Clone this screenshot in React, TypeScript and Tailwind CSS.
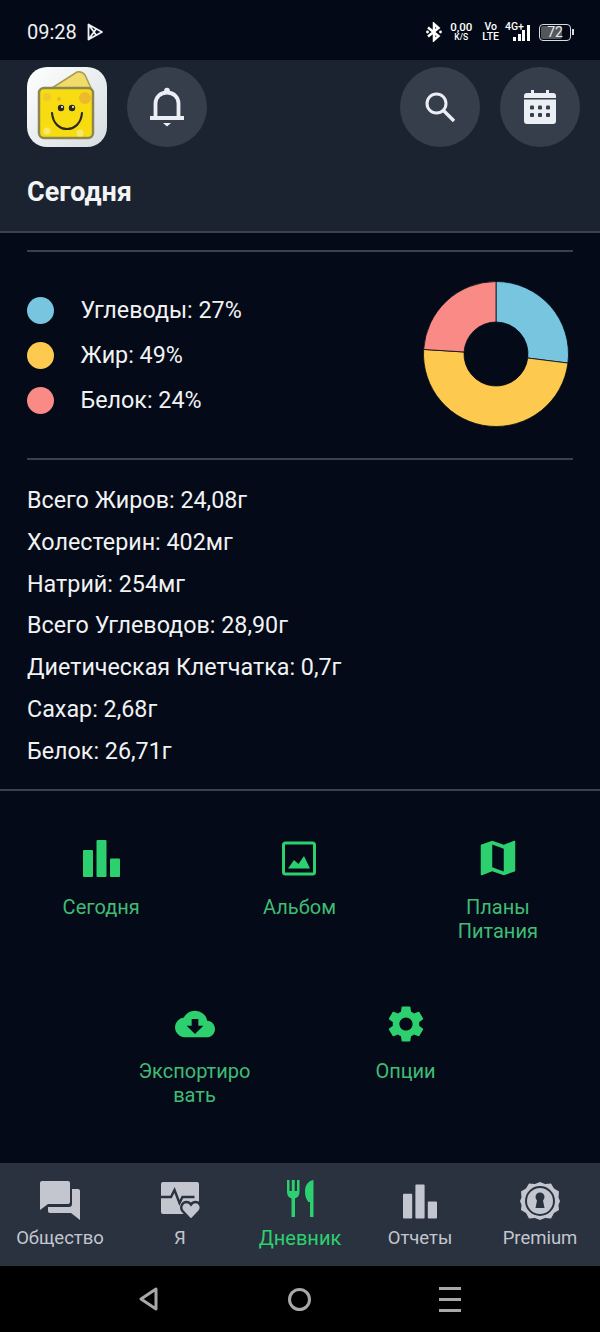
import { MdCloudDownload, MdMap, MdSettings } from 'react-icons/md';

const polar = (r: number, pct: number) => {
  const a = (pct / 100) * 2 * Math.PI;
  return [73 + r * Math.sin(a), 73 - r * Math.cos(a)];
};

const slice = (from: number, to: number) => {
  const [x1, y1] = polar(72.5, from);
  const [x2, y2] = polar(72.5, to);
  const [x3, y3] = polar(32, to);
  const [x4, y4] = polar(32, from);
  const large = to - from > 50 ? 1 : 0;
  return `M${x1} ${y1}A72.5 72.5 0 ${large} 1 ${x2} ${y2}L${x3} ${y3}A32 32 0 ${large} 0 ${x4} ${y4}Z`;
};

const Bars = ({ className }: { className: string }) => (
  <svg viewBox="0 0 37 37" className={className} fill="currentColor">
    <rect x="0" y="10" width="10" height="27" rx="1" />
    <rect x="13.5" y="0" width="10" height="37" rx="1" />
    <rect x="27" y="18.5" width="10" height="18.5" rx="1" />
  </svg>
);

const Cheese = () => (
  <svg viewBox="0 0 80 80" className="w-[80px] h-[80px]">
    <path d="M25 21 50 5q5-1 8 3l6 13z" fill="#f1dc6a" stroke="#a89c55" strokeWidth="1.500" />
    <rect x="12" y="21" width="54" height="50" rx="5" fill="#f7dc12" stroke="#8e8650" strokeWidth="2.500" />
    <circle cx="58" cy="31" r="6" fill="#eeb92c" />
    <circle cx="20" cy="30" r="4" fill="#f2c92c" />
    <circle cx="32" cy="32" r="2" fill="#eeb92c" />
    <circle cx="20" cy="64" r="3.500" fill="#f7e76a" />
    <circle cx="53" cy="66" r="3.500" fill="#f7e76a" />
    <circle cx="34" cy="41" r="3.200" fill="#2c2a20" />
    <circle cx="45" cy="41" r="3.200" fill="#2c2a20" />
    <circle cx="35" cy="40" r="1" fill="#fff" />
    <circle cx="46" cy="40" r="1" fill="#fff" />
    <path d="M25 46c1 11 8 16 15 16s14-5 15-16" fill="none" stroke="#2c2a20" strokeWidth="2.200" strokeLinecap="round" />
  </svg>
);

const legend = [
  { color: 'bg-[#78c5e0]', label: 'Углеводы: 27%' },
  { color: 'bg-[#fdc94f]', label: 'Жир: 49%' },
  { color: 'bg-[#f98a85]', label: 'Белок: 24%' },
];

const nutrients = [
  'Всего Жиров: 24,08г',
  'Холестерин: 402мг',
  'Натрий: 254мг',
  'Всего Углеводов: 28,90г',
  'Диетическая Клетчатка: 0,7г',
  'Сахар: 2,68г',
  'Белок: 26,71г',
];

const App = () => {
  return (
    <div className="w-[600px] h-[1332px] flex flex-col bg-[#040a17] text-white font-['Roboto',sans-serif] overflow-hidden">
      {/* status bar */}
      <div className="h-[60px] shrink-0 flex items-center justify-between pt-[4px] pl-[27px] pr-[26px] bg-[#030916]">
        <div className="flex items-center gap-[10px] text-[20px] text-[#eef0f3]">
          <span>09:28</span>
          <svg viewBox="0 0 16 18" className="w-[16px] h-[18px]" fill="none" stroke="currentColor" strokeWidth="1.800" strokeLinejoin="round">
            <path d="M1.500 1.500v15L15 9zM1.500 1.500 9.500 12.500M1.500 16.500 9.500 5.500" />
          </svg>
        </div>
        <div className="flex items-center text-white">
          <svg viewBox="0 0 16 20" className="w-[16px] h-[20px] mr-[8px]" fill="none" stroke="currentColor" strokeWidth="2.500">
            <path d="M2 5.500 12.500 14 8 18V2l4.500 4L2 14.500" />
            <circle cx="1.500" cy="10" r="1.400" fill="currentColor" stroke="none" />
            <circle cx="14.500" cy="10" r="1.400" fill="currentColor" stroke="none" />
          </svg>
          <div className="flex flex-col items-center w-[22px] text-[11px] leading-[10px] font-medium mr-[10px]">
            <span className="text-[11.500px]">0,00</span>
            <span className="text-[8.500px]">K/S</span>
          </div>
          <div className="flex flex-col items-center text-[10.500px] leading-[10.500px] font-medium mr-[6px]">
            <span>Vo</span>
            <span>LTE</span>
          </div>
          <div className="relative w-[27px] h-[18px] mr-[7px]">
            <span className="absolute left-0 -top-[1px] text-[10.500px] leading-[10px] font-medium">4G+</span>
            <div className="absolute left-[8px] bottom-0 flex items-end gap-[1.500px]">
              <span className="w-[3px] h-[4px] bg-white" />
              <span className="w-[3px] h-[7px] bg-white" />
              <span className="w-[3px] h-[11px] bg-white" />
              <span className="w-[3px] h-[16px] bg-white" />
            </div>
          </div>
          <div className="relative w-[32px] h-[17px] rounded-[4px] border border-[#d8dadd] p-[1px]">
            <div className="w-[21px] h-full rounded-[2px] bg-[#53575c]" />
            <span className="absolute inset-0 flex items-center justify-center text-[14px] leading-none text-[#e8e9ea]">72</span>
          </div>
          <span className="w-[2px] h-[6px] ml-[1px] bg-[#d8dadd]" />
        </div>
      </div>

      {/* header */}
      <div className="h-[173px] shrink-0 flex flex-col bg-[#1c2330] border-b-2 border-[#3b414c]">
        <div className="flex items-center justify-between pt-[7px] pl-[27px] pr-[20px]">
          <div className="flex items-center gap-[20px]">
            <div className="w-[80px] h-[80px] rounded-[20px] overflow-hidden bg-gradient-to-br from-[#ffffff] to-[#d6dde0]">
              <Cheese />
            </div>
            <div className="w-[80px] h-[80px] rounded-full bg-[#373e4b] flex items-center justify-center">
              <svg viewBox="0 0 34 40" className="w-[34px] h-[40px]" fill="none" stroke="#eceef5" strokeWidth="3.800">
                <path d="M5.500 30V16.500C5.500 10 10.500 5.500 17 5.500S28.500 10 28.500 16.500V30" />
                <path d="M0.500 31H33.500" strokeWidth="4" strokeLinecap="round" />
                <circle cx="17" cy="3.500" r="2.800" fill="#eceef5" stroke="none" />
                <path d="M13 36h8l-4 3.500z" fill="#eceef5" stroke="none" />
              </svg>
            </div>
          </div>
          <div className="flex items-center gap-[20px]">
            <div className="w-[80px] h-[80px] rounded-full bg-[#373e4b] flex items-center justify-center">
              <svg viewBox="0 0 30 30" className="w-[30px] h-[30px]" fill="none" stroke="#eceef5" strokeWidth="3">
                <circle cx="11.500" cy="11.500" r="9.500" />
                <path d="M18.500 18.500 29 29" strokeWidth="3.400" />
              </svg>
            </div>
            <div className="w-[80px] h-[80px] rounded-full bg-[#373e4b] flex items-center justify-center">
              <svg viewBox="0 0 32 34" className="w-[32px] h-[34px]">
                <path d="M7 0h3v3h12V0h3v3h4q3 0 3 3v25q0 3-3 3H3q-3 0-3-3V6q0-3 3-3h4z" fill="#eceef5" />
                <rect x="0" y="8" width="32" height="1.500" fill="#373e4b" />
                <g fill="#373e4b">
                  <rect x="6" y="15.500" width="4" height="4" rx="1" />
                  <rect x="14" y="15.500" width="4" height="4" rx="1" />
                  <rect x="22" y="15.500" width="4" height="4" rx="1" />
                  <rect x="6" y="23" width="4" height="4" rx="1" />
                  <rect x="14" y="23" width="4" height="4" rx="1" />
                  <rect x="22" y="23" width="4" height="4" rx="1" />
                </g>
              </svg>
            </div>
          </div>
        </div>
        <h1 className="mt-[30px] pl-[27px] text-[27px] leading-[30px] font-bold text-[#f3f4f6]">Сегодня</h1>
      </div>

      {/* summary */}
      <div className="shrink-0 px-[27px] pt-[17px]">
        <div className="h-[2px] bg-[#3b414c]" />
        <div className="h-[206px] flex items-center justify-between pr-[4px]">
          <div className="flex flex-col gap-[18px]">
            {legend.map((item) => (
              <div key={item.label} className="flex items-center gap-[26.500px] h-[27px]">
                <span className={`w-[27px] h-[27px] rounded-full ${item.color}`} />
                <span className="text-[23.300px] text-[#f1f2f4]">{item.label}</span>
              </div>
            ))}
          </div>
          <svg viewBox="0 0 146 146" className="w-[146px] h-[146px] -mt-[3px]">
            <path d={slice(0, 27)} fill="#78c5e0" stroke="#040a17" strokeWidth="0.800" />
            <path d={slice(27, 76)} fill="#fdc94f" stroke="#040a17" strokeWidth="0.800" />
            <path d={slice(76, 100)} fill="#f98a85" stroke="#040a17" strokeWidth="0.800" />
          </svg>
        </div>
        <div className="h-[2px] bg-[#3b414c]" />
        <div className="pt-[20px] flex flex-col">
          {nutrients.map((line) => (
            <div key={line} className="h-[41.700px] flex items-center text-[23.300px] text-[#f1f2f4]">{line}</div>
          ))}
        </div>
      </div>
      <div className="h-[2px] shrink-0 mt-[17px] bg-[#3b414c]" />

      {/* actions */}
      <div className="flex-1 text-[#2dd06f]">
        <div className="grid grid-cols-3 pl-[2px] pr-[3px] pt-[49px]">
          <div className="flex flex-col items-center">
            <Bars className="w-[37px] h-[37px]" />
            <span className="mt-[18px] text-[20px] leading-[24px] text-center text-[#3fbd75]">Сегодня</span>
          </div>
          <div className="flex flex-col items-center">
            <svg viewBox="0 0 34 37" className="w-[34px] h-[37px]" fill="currentColor">
              <rect x="1.500" y="3" width="31" height="31" rx="2" fill="none" stroke="currentColor" strokeWidth="3" />
              <path d="M6 28.500 12 20l4.500 4 5.500-8 6 12.500z" />
            </svg>
            <span className="mt-[18px] text-[20px] leading-[24px] text-center text-[#3fbd75]">Альбом</span>
          </div>
          <div className="flex flex-col items-center">
            <MdMap className="w-[46px] h-[46px] -my-[4.500px]" />
            <span className="mt-[18px] text-[20px] leading-[24px] text-center text-[#3fbd75]">Планы<br />Питания</span>
          </div>
        </div>
        <div className="flex justify-center gap-[12px] pt-[57px]">
          <div className="w-[199px] flex flex-col items-center">
            <MdCloudDownload className="w-[40px] h-[40px] my-[4px]" />
            <span className="mt-[11px] text-[20px] leading-[24px] text-center text-[#3fbd75]">Экспортиро<br />вать</span>
          </div>
          <div className="w-[199px] flex flex-col items-center">
            <MdSettings className="w-[44px] h-[44px] my-[2px]" />
            <span className="mt-[11px] text-[20px] leading-[24px] text-center text-[#3fbd75]">Опции</span>
          </div>
        </div>
      </div>

      {/* bottom tabs */}
      <div className="h-[103px] shrink-0 grid grid-cols-5 bg-[#2a3240] text-[18.500px] text-[#c3c6cf]">
        <div className="flex flex-col items-center pt-[14px]">
          <div className="h-[43px] flex items-end justify-center">
            <svg viewBox="0 0 40 39" className="w-[40px] h-[39px]" fill="currentColor">
              <path d="M0 2q0-2 2-2h26q2 0 2 2v19q0 2-2 2H8l-8 6z" />
              <path d="M32 8v15q0 3-3 3H8v4q0 2 2 2h21l9 7V10q0-2-2-2z" />
            </svg>
          </div>
          <span className="mt-[6px] leading-[24px]">Общество</span>
        </div>
        <div className="flex flex-col items-center pt-[14px]">
          <div className="h-[43px] flex items-end justify-center">
            <svg viewBox="0 0 40 38" className="w-[40px] h-[38px] ml-[1px]">
              <rect x="0" y="0" width="38" height="32" rx="2" fill="#c3c6cf" />
              <path d="M0 15h10l3.500-7 5 13 3-6h12" fill="none" stroke="#2a3240" strokeWidth="2.400" />
              <path d="M30 38 21.500 29c-3-4 0-9 4-9 2 0 3.500 1 4.500 2.500 1-1.500 2.500-2.500 4.500-2.500 4 0 7 5 4 9z" fill="#c3c6cf" stroke="#2a3240" strokeWidth="2.400" />
            </svg>
          </div>
          <span className="mt-[6px] leading-[24px]">Я</span>
        </div>
        <div className="flex flex-col items-center pt-[14px] text-[#2dd06f]">
          <div className="h-[43px] flex justify-center pt-[3px]">
            <svg viewBox="0 0 27 37" className="w-[27px] h-[37px]" fill="currentColor">
              <path d="M0 0h2.500v11h2.300V0h2.900v11h2.300V0H12.500v12q0 5-4.500 6.500V37H4.500V18.500Q0 17 0 12z" />
              <path d="M18 12C18 5 21 1 26.500 0V37H23V22h-1.500Q18 18 18 12z" />
            </svg>
          </div>
          <span className="mt-[6px] text-[20px] leading-[24px]">Дневник</span>
        </div>
        <div className="flex flex-col items-center pt-[14px]">
          <div className="h-[43px] flex items-end justify-center">
            <Bars className="w-[34px] h-[37px]" />
          </div>
          <span className="mt-[6px] leading-[24px]">Отчеты</span>
        </div>
        <div className="flex flex-col items-center pt-[14px]">
          <div className="h-[43px] flex items-end justify-center">
            <svg viewBox="0 0 40 38" className="w-[40px] h-[38px]">
              <path d="M20 0l5 2 6-.5 3 5 5 3-.5 6L40 19l-1.500 4 .5 5-5 3-3 5.500-6-.5-5 2-5-2-6 .5-3-5.500-5-3 .5-5L0 19l1.500-3.500-.5-6 5-3 3-5 6 .5z" fill="#c3c6cf" />
              <circle cx="20" cy="19" r="14" fill="none" stroke="#2a3240" strokeWidth="2" />
              <circle cx="20" cy="15" r="4.500" fill="#2a3240" />
              <path d="M17.500 16h5l2 10h-9z" fill="#2a3240" />
            </svg>
          </div>
          <span className="mt-[6px] leading-[24px]">Premium</span>
        </div>
      </div>

      {/* android nav */}
      <div className="h-[66px] shrink-0 bg-black flex items-center justify-center">
        <svg viewBox="0 0 19 24" className="w-[19px] h-[24px]" fill="none" stroke="#a8a8a8" strokeWidth="3" strokeLinejoin="round">
          <path d="M17 2 2 12l15 10z" />
        </svg>
        <span className="w-[23px] h-[23px] ml-[130px] mr-[128px] rounded-full border-[3px] border-[#a8a8a8]" />
        <div className="flex flex-col gap-[8px]">
          <span className="w-[22px] h-[3px] bg-[#a8a8a8]" />
          <span className="w-[22px] h-[3px] bg-[#a8a8a8]" />
          <span className="w-[22px] h-[3px] bg-[#a8a8a8]" />
        </div>
      </div>
    </div>
  );
};

export default App;
